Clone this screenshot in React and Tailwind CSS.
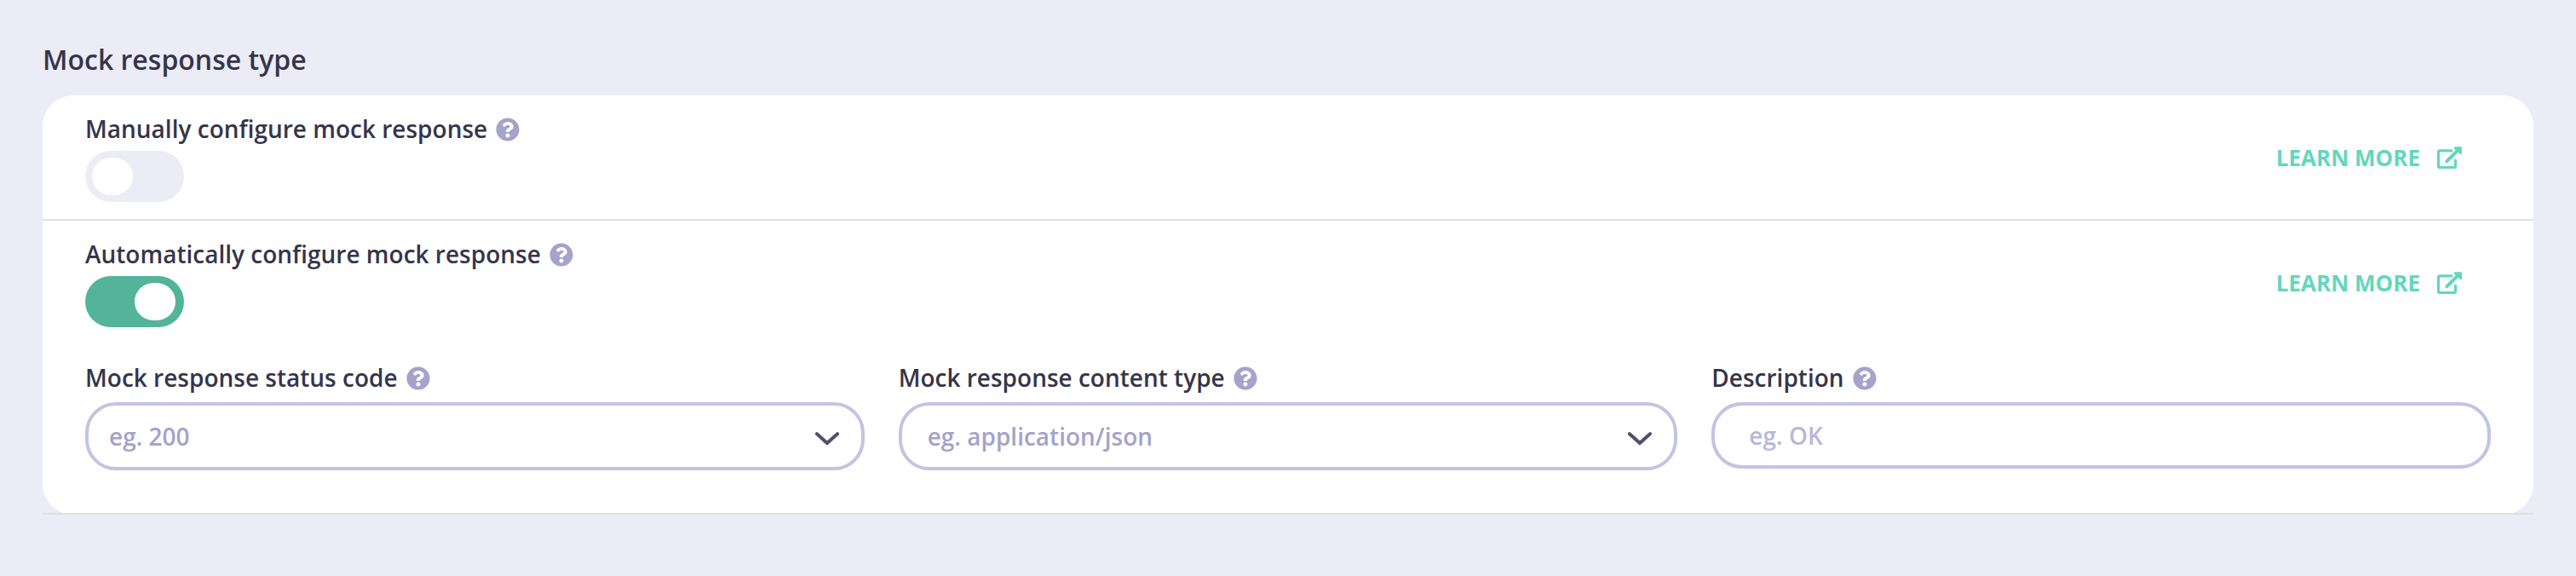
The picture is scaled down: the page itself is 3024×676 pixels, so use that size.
function HelpIcon() {
  return (
    <svg viewBox="0 0 512 512" className="mt-px h-7 w-7 shrink-0 fill-[#a3a3cb]">
      <path d="M504 256c0 136.997-111.043 248-248 248S8 392.997 8 256C8 119.083 119.043 8 256 8s248 111.083 248 248zM262.655 90c-54.497 0-89.255 22.957-116.549 63.758-3.536 5.286-2.353 12.415 2.715 16.258l34.699 26.31c5.205 3.947 12.621 3.008 16.665-2.122 17.864-22.658 30.113-35.797 57.303-35.797 20.429 0 45.698 13.148 45.698 32.958 0 14.976-12.363 22.667-32.534 33.976C247.128 238.528 216 254.941 216 296v4c0 6.627 5.373 12 12 12h56c6.627 0 12-5.373 12-12v-1.333c0-28.462 83.186-29.647 83.186-106.667 0-58.002-60.165-102-116.531-102zM256 338c-25.365 0-46 20.635-46 46 0 25.364 20.635 46 46 46s46-20.636 46-46c0-25.365-20.635-46-46-46z" />
    </svg>
  );
}

function Label({ children }) {
  return (
    <div className="flex h-[38px] items-center gap-[10px] text-[28px] leading-[38px] font-semibold text-[#35354b]">
      <span className="whitespace-nowrap">{children}</span>
      <HelpIcon />
    </div>
  );
}

function LearnMore() {
  return (
    <a className="flex items-center gap-[19px] text-[26px] leading-9 font-bold text-[#63d7bb]">
      <span className="whitespace-nowrap">LEARN MORE</span>
      <svg viewBox="0 0 30 27" className="h-[27px] w-[30px]" fill="none" stroke="currentColor">
        <path d="M18 4.8H4.3Q2.5 4.8 2.5 6.6V22.7Q2.5 24.5 4.3 24.5H20.7Q22.5 24.5 22.5 22.7V16" strokeWidth="3.2" strokeLinecap="round" />
        <path d="M12.3 17.3L25 4.8" strokeWidth="4" strokeLinecap="round" />
        <path d="M21 0.3H30V9H28.2L21 2.4Z" fill="currentColor" stroke="none" />
      </svg>
    </a>
  );
}

function Toggle({ on }) {
  return (
    <div
      className={
        on
          ? "flex h-[60px] w-[116px] items-center justify-end rounded-[30px] bg-[#53b499] pr-[10px]"
          : "flex h-[60px] w-[116px] items-center rounded-[30px] bg-[#ececf6] pl-2"
      }
    >
      <span className="h-11 w-12 rounded-[22px] bg-white" />
    </div>
  );
}

function Chevron() {
  return (
    <svg viewBox="0 0 28 16" className="mt-[6px] h-4 w-7" fill="none" stroke="#504f6c" strokeWidth="4" strokeLinecap="round">
      <path d="M2 2.2L14 13L26 2.2" />
    </svg>
  );
}

export default function App() {
  return (
    <div className="h-[676px] w-[3024px] bg-[#ececf6] px-[50px] pt-[48px] font-['Open_Sans',sans-serif]">
      <h2 className="h-16 text-[32px] leading-[44px] font-semibold text-[#35354b]">Mock response type</h2>
      <div className="h-[492px] rounded-[36px] bg-white">
        <div className="flex h-[147px] justify-between border-b-2 border-[#e0e0e0] pr-[84px] pl-[50px]">
          <div className="flex flex-col gap-[7px] pt-5">
            <Label>Manually configure mock response</Label>
            <Toggle on={false} />
          </div>
          <div className="pt-[55px]">
            <LearnMore />
          </div>
        </div>
        <div className="h-[345px] border-b-2 border-[#e0e0e0] px-[50px]">
          <div className="flex h-[165px] justify-between pr-[34px]">
            <div className="flex flex-col gap-[7px] pt-5">
              <Label>Automatically configure mock response</Label>
              <Toggle on />
            </div>
            <div className="pt-[55px]">
              <LearnMore />
            </div>
          </div>
          <div className="grid grid-cols-3 gap-10 text-[28px] leading-[38px] font-semibold text-[#a3a3cb]">
            <div className="flex flex-col gap-[10px]">
              <Label>Mock response status code</Label>
              <div className="flex h-20 items-center justify-between rounded-[36px] border-4 border-[#c3c3e2] pr-[26px] pl-6">
                <span>eg. 200</span>
                <Chevron />
              </div>
            </div>
            <div className="flex flex-col gap-[10px]">
              <Label>Mock response content type</Label>
              <div className="flex h-20 items-center justify-between rounded-[36px] border-4 border-[#c3c3e2] pr-[26px] pl-[30px]">
                <span>eg. application/json</span>
                <Chevron />
              </div>
            </div>
            <div className="flex flex-col gap-[10px]">
              <Label>Description</Label>
              <div className="flex h-[78px] items-center rounded-[36px] border-4 border-[#c3c3e2] pl-10 text-[#b8b8d8]">
                <span>eg. OK</span>
              </div>
            </div>
          </div>
        </div>
      </div>
    </div>
  );
}
